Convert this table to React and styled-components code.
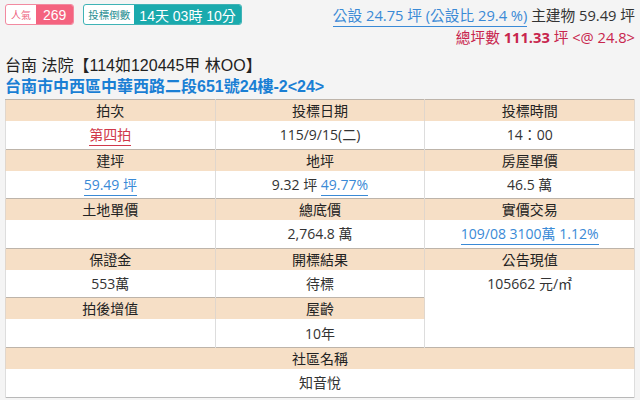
import styled, { createGlobalStyle } from "styled-components";

const GlobalStyle = createGlobalStyle`
    html, body {
        margin: 0;
        padding: 0;
        background: #f4f4f4;
    }
    body {
        font-family: "Open Sans", "Noto Sans CJK TC", sans-serif;
        color: #333;
    }
`;

const Page = styled.div`
    width: 640px;
    height: 400px;
    box-sizing: border-box;
    padding: 4px 5px 0 5px;
    overflow: hidden;
`;

const TopBar = styled.div`
    display: flex;
    justify-content: space-between;
    align-items: flex-start;
    height: 51px;
`;

const Badges = styled.div`
    display: flex;
    gap: 9px;
    font-family: "Liberation Sans", "Noto Sans CJK TC", sans-serif;
`;

const Badge = styled.div`
    display: flex;
    height: 21px;
    box-sizing: border-box;
    border: 1px solid ${(p) => p.color};
    border-radius: 3px;
    overflow: hidden;
    background: #fff;
`;

const BadgeLabel = styled.span`
    display: flex;
    align-items: center;
    padding: 0 ${(p) => p.pad || 5}px;
    font-size: ${(p) => p.size || 10.5}px;
    color: ${(p) => p.color};
`;

const BadgeValue = styled.span`
    display: flex;
    align-items: center;
    padding: 0 ${(p) => p.pad || 6}px;
    font-size: ${(p) => p.size || 14}px;
    color: #fff;
    background: ${(p) => p.color};
`;

const Summary = styled.div`
    display: flex;
    flex-direction: column;
    align-items: flex-end;
    gap: 1px;
    padding-top: 1px;
    font-size: 14.7px;
    line-height: 21px;
`;

const SummaryLine = styled.div`
    color: ${(p) => p.color || "#333"};
    white-space: nowrap;
`;

const Link = styled.span`
    color: ${(p) => p.color || "#3a8ad6"};
    border-bottom: 1px solid ${(p) => p.color || "#3a8ad6"};
    padding-bottom: 1px;
`;

const Strong = styled.b`
    font-weight: 700;
`;

const Title = styled.div`
    font-family: "Liberation Sans", "Noto Sans CJK TC", sans-serif;
    font-size: 16px;
    color: #222;
    line-height: 21px;
`;

const Address = styled.div`
    font-family: "Liberation Sans", "Noto Sans CJK TC", sans-serif;
    font-size: 16px;
    font-weight: 700;
    color: #1a7fd4;
    line-height: 21px;
    margin-bottom: 2px;
`;

const Table = styled.table`
    width: 630px;
    border-collapse: collapse;
    table-layout: fixed;
    background: #fff;
    border: 1px solid #b8b8b8;
    font-size: 14px;
`;

const HeadCell = styled.td`
    height: 21px;
    padding: 0;
    text-align: center;
    background: #f6dfc6;
    color: #222;
    line-height: 21px;
    border-top: 1px solid #bdb4aa;
    border-left: 1px solid #e0d6cc;
    border-right: 1px solid #e0d6cc;
`;

const Cell = styled.td`
    height: 27.6px;
    padding: 0;
    text-align: center;
    color: #333;
    line-height: 21px;
    border-left: 1px solid #ddd;
    border-right: 1px solid #ddd;
`;

const rows = [
    {
        head: ["拍次", "投標日期", "投標時間"],
        vals: [
            <Link color="#d0384a">第四拍</Link>,
            "115/9/15(二)",
            "14：00",
        ],
    },
    {
        head: ["建坪", "地坪", "房屋單價"],
        vals: [
            <Link>59.49 坪</Link>,
            <>
                9.32 坪 <Link>49.77%</Link>
            </>,
            "46.5 萬",
        ],
    },
    {
        head: ["土地單價", "總底價", "實價交易"],
        vals: ["", "2,764.8 萬", <Link>109/08 3100萬 1.12%</Link>],
    },
    {
        head: ["保證金", "開標結果", "公告現值"],
        vals: ["553萬", "待標", "105662 元/㎡"],
    },
];

const App = () => {
    return (
        <>
            <GlobalStyle />
            <Page>
                <TopBar>
                    <Badges>
                        <Badge color="#f28aa0">
                            <BadgeLabel color="#ee5d7c" size={10}>
                                人氣
                            </BadgeLabel>
                            <BadgeValue color="#f4637f" pad={7}>
                                269
                            </BadgeValue>
                        </Badge>
                        <Badge color="#3fb3b6">
                            <BadgeLabel color="#2a8f93" pad={4}>
                                投標倒數
                            </BadgeLabel>
                            <BadgeValue color="#1aaaad" pad={5}>
                                14天 03時 10分
                            </BadgeValue>
                        </Badge>
                    </Badges>
                    <Summary>
                        <SummaryLine>
                            <Link>公設 24.75 坪 (公設比 29.4 %)</Link> 主建物 59.49 坪
                        </SummaryLine>
                        <SummaryLine color="#c8254d">
                            總坪數 <Strong>111.33</Strong> 坪 &lt;@ 24.8&gt;
                        </SummaryLine>
                    </Summary>
                </TopBar>
                <Title>台南 法院【114如120445甲 林OO】</Title>
                <Address>台南市中西區中華西路二段651號24樓-2&lt;24&gt;</Address>
                <Table>
                    <tbody>
                        {rows.map((r, i) => (
                            <>
                                <tr key={"h" + i}>
                                    {r.head.map((h, j) => (
                                        <HeadCell key={j}>{h}</HeadCell>
                                    ))}
                                </tr>
                                <tr key={"v" + i}>
                                    {r.vals.map((v, j) => (
                                        <Cell key={j}>{v}</Cell>
                                    ))}
                                </tr>
                            </>
                        ))}
                        <tr>
                            <HeadCell>拍後增值</HeadCell>
                            <HeadCell>屋齡</HeadCell>
                            <Cell rowSpan={2} />
                        </tr>
                        <tr>
                            <Cell />
                            <Cell>10年</Cell>
                        </tr>
                        <tr>
                            <HeadCell colSpan={3}>社區名稱</HeadCell>
                        </tr>
                        <tr>
                            <Cell colSpan={3}>知音悅</Cell>
                        </tr>
                    </tbody>
                </Table>
            </Page>
        </>
    );
};

export default App;
